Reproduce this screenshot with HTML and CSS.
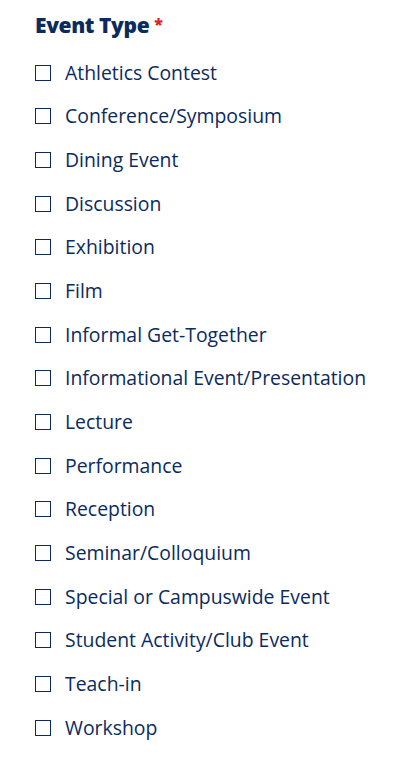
FILE: index.html
```html
<!DOCTYPE html>
<html>
<head>
<meta charset="utf-8">
<link rel="stylesheet" href="styles.css">
</head>
<body>
<div class="field">
  <div class="legend">Event Type <span class="req">*</span></div>
  <ul class="options">
    <li class="option"><span class="box"></span><span class="label">Athletics Contest</span></li>
    <li class="option"><span class="box"></span><span class="label">Conference/Symposium</span></li>
    <li class="option"><span class="box"></span><span class="label">Dining Event</span></li>
    <li class="option"><span class="box"></span><span class="label">Discussion</span></li>
    <li class="option"><span class="box"></span><span class="label">Exhibition</span></li>
    <li class="option"><span class="box"></span><span class="label">Film</span></li>
    <li class="option"><span class="box"></span><span class="label">Informal Get-Together</span></li>
    <li class="option"><span class="box"></span><span class="label">Informational Event/Presentation</span></li>
    <li class="option"><span class="box"></span><span class="label">Lecture</span></li>
    <li class="option"><span class="box"></span><span class="label">Performance</span></li>
    <li class="option"><span class="box"></span><span class="label">Reception</span></li>
    <li class="option"><span class="box"></span><span class="label">Seminar/Colloquium</span></li>
    <li class="option"><span class="box"></span><span class="label">Special or Campuswide Event</span></li>
    <li class="option"><span class="box"></span><span class="label">Student Activity/Club Event</span></li>
    <li class="option"><span class="box"></span><span class="label">Teach-in</span></li>
    <li class="option"><span class="box"></span><span class="label">Workshop</span></li>
  </ul>
</div>
</body>
</html>
```
FILE: styles.css
```css
html, body {
  margin: 0;
  padding: 0;
  background: #ffffff;
}
body {
  font-family: "Open Sans", "Liberation Sans", sans-serif;
  color: #0b2b5c;
}
.field {
  padding: 11px 0 0 35px;
}
.legend {
  font-size: 21px;
  font-weight: 800;
  line-height: 26px;
  letter-spacing: -0.4px;
  color: #0b2b5c;
}
.req {
  color: #e0221c;
  font-size: 16px;
  vertical-align: 3px;
}
.options {
  list-style: none;
  margin: 0;
  padding: 0;
  padding-top: 13px;
}
.option {
  display: flex;
  align-items: center;
  height: 43.67px;
}
.box {
  width: 14px;
  height: 14px;
  border: 1px solid #0b2b5c;
  flex: none;
}
.label {
  margin-left: 14px;
  font-size: 19.4px;
  line-height: 24px;
}
```
